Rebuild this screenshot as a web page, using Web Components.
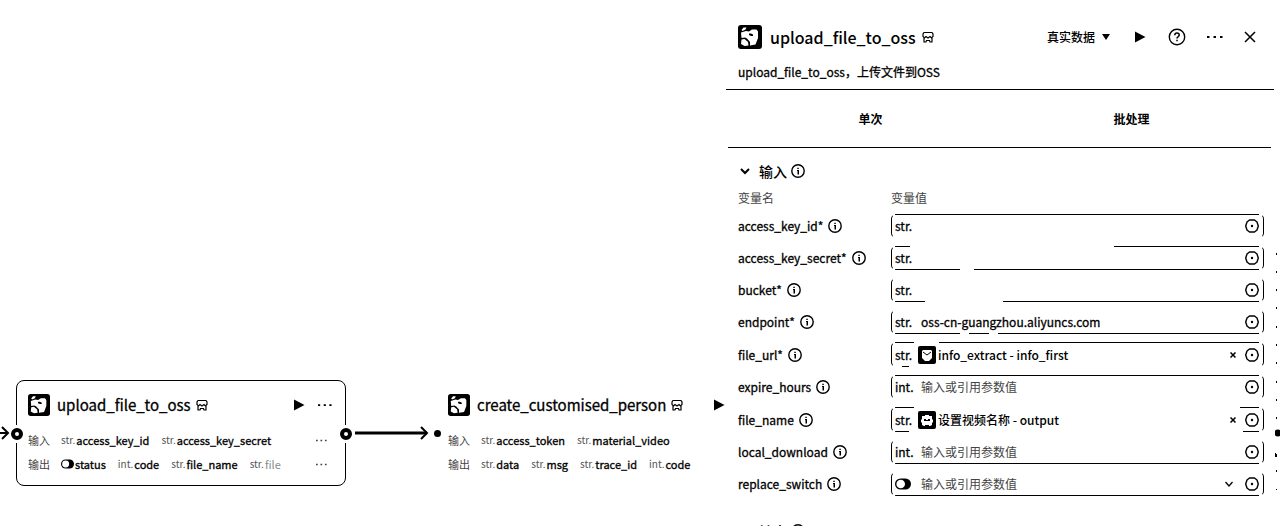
<!DOCTYPE html>
<html lang="zh-CN">
<head>
<meta charset="utf-8">
<meta name="viewport" content="width=device-width, initial-scale=1">
<title>upload_file_to_oss</title>
<style>
  body { margin: 0; background: #fff; color: #000; font-family: "Noto Sans CJK SC", sans-serif; }
</style>
</head>
<body>
<flow-editor></flow-editor>
<script>
const ICONS = {
  logo: ['0 0 24 24', '<rect width="24" height="24" rx="3"/><path fill="#fff" d="M3.500 5l2-2.500h3l-1 2-3 1.500zM3 7.500l5-1.500 3 .5 3-2h4.500L20 6.500V13l-2.500 6.500-5.500 1V17l-3-3.500-2-1-3.500.5zM3.500 14.500l3-.5 3.500 3 .5 3.500-4 .5-3.500-2z"/><path d="M11 8.500h2l2 1v1.500h-2l-2-1z"/>'],
  store: ['0 0 12 12', '<path fill="none" stroke="currentColor" stroke-width="1.200" d="M2 1.500h8l1 1.500v2.500L9.500 7 8 5.500 6 7 4 5.500 2.500 7 1 5.500V3zM2 7v4h2l.5-1.500h3L8 11h2V7"/>'],
  play: ['0 0 12 12', '<path d="M0 0.500l10.500 5.500L0 11.500z"/>'],
  more: ['0 0 16 16', '<path d="M0 7h2.500v2H0zM6.500 7H9v2H6.500zM13 7h2.500v2H13z"/>'],
  help: ['0 0 18 18', '<circle cx="9" cy="9" r="7.700" fill="none" stroke="currentColor" stroke-width="1.400"/><path d="M6.800 7.200q0-2.200 2.200-2.200t2.200 2q0 1-1.200 1.800-1 .6-1 1.700M9 11.700v1.500" fill="none" stroke="currentColor" stroke-width="1.500"/>'],
  close: ['0 0 12 12', '<path d="M1 1l10 10M11 1L1 11" stroke="currentColor" stroke-width="1.500"/>'],
  clear: ['0 0 6 6', '<path d="M.5.5l5 5M5.500.5l-5 5" stroke="currentColor" stroke-width="1.500"/>'],
  info: ['0 0 14 14', '<circle cx="7" cy="7" r="6.200" fill="none" stroke="currentColor" stroke-width="1.400"/><path d="M6 6h2v4.500H6.500V7H6zM6.300 3.800h1.500v1.200H6.300z"/>'],
  down: ['0 0 10 10', '<path d="M1 3l4 4 4-4" fill="none" stroke="currentColor" stroke-width="2"/>'],
  thin: ['0 0 8 8', '<path d="M.5 2L4 6l3.500-4" fill="none" stroke="currentColor" stroke-width="1.300"/>'],
  caret: ['0 0 8 8', '<path d="M0 1h8L4 7z"/>'],
  hex: ['0 0 14 14', '<path d="M4.500 1h5L12 3l1.300 4L12 11l-2.500 2h-5L2 11 .7 7 2 3z" fill="none" stroke="currentColor" stroke-width="1.400" stroke-linejoin="round"/><circle cx="7" cy="7" r="1.200"/>'],
  toggle: ['0 0 16 12', '<rect width="16" height="11" y=".5" rx="5.500"/><circle cx="5.700" cy="6" r="4.300" fill="#fff"/>'],
  mail: ['0 0 18 18', '<rect width="18" height="18" rx="2"/><path fill="#fff" d="M5 4h8l1 1v7l-3 3H7l-3-3V5z"/><path d="M5 6l4 3 4-3" fill="none" stroke="#000"/>'],
  robot: ['0 0 18 18', '<rect width="18" height="18" rx="2"/><path fill="#fff" d="M7 4h4v1h3v3l1 1v2l-1 1v2l-2 1h-1v-1H7v1H6l-2-1v-2l-1-1V9l1-1V5h3z"/><path d="M6 8h2v1h2V8h2v2H6z"/>'],
  ring: ['0 0 12 12', '<circle cx="6" cy="6" r="4" fill="#fff" stroke="currentColor" stroke-width="4"/>'],
  dot: ['0 0 8 8', '<circle cx="4" cy="4" r="4"/>'],
  edge: ['0 0 74 14', '<path d="M0 7h72" stroke="currentColor" stroke-width="3"/><path d="M66 1l6 6-6 6" fill="none" stroke="currentColor" stroke-width="2"/>'],
  arrow: ['0 0 10 14', '<path d="M0 7h8M2 1l6 6-6 6" fill="none" stroke="currentColor" stroke-width="2"/>'],
  edgemarks: ['0 0 5 240', '<path d="M1 3h1v2H1zM1 21h1v2H1zM1 39h1v2H1zM1 57h1v2H1zM1 76h1v2H1zM1 94h1v2H1zM1 112h1v2H1zM1 131h1v2H1zM1 149h1v2H1zM1 167h1v2H1zM0 203h1v1h1v3H0zM1 220h1v2H1zM1 240h1v-1H1z"/><circle cx="3" cy="183" r="3.500"/>']
};

class UiIcon extends HTMLElement {
  connectedCallback() {
    const [box, art] = ICONS[this.getAttribute('name')];
    const [, , w, h] = box.split(' ');
    const width = this.getAttribute('width') || w;
    this.attachShadow({ mode: 'open' }).innerHTML = `
      <style>:host{display:inline-flex;flex:none} svg{display:block;fill:currentColor}</style>
      <svg viewBox="${box}" width="${width}" height="${Math.round(width * h / w)}" aria-hidden="true">${art}</svg>`;
  }
}
customElements.define('ui-icon', UiIcon);

class NodeParam extends HTMLElement {
  connectedCallback() {
    const type = this.getAttribute('type');
    this.attachShadow({ mode: 'open' }).innerHTML = `
      <style>
        :host{display:inline-flex;align-items:center;flex:none;gap:1px;font-size:11px;line-height:16px}
        :host(:not([faded])) span{-webkit-text-stroke:.3px}
        small{font-size:10px;color:#555}
        :host([faded]){color:#888}
      </style>
      ${type === 'bool' ? '<ui-icon name="toggle" width="13"></ui-icon>' : `<small>${type}.</small>`}<span><slot></slot></span>`;
  }
}
customElements.define('node-param', NodeParam);

class FlowNode extends HTMLElement {
  connectedCallback() {
    this.attachShadow({ mode: 'open' }).innerHTML = `
      <style>
        :host{display:block;box-sizing:border-box;width:330px;padding:13px 11px;border:1px solid transparent;border-radius:8px}
        :host([selected]){border-color:#000}
        header{display:flex;align-items:center;height:22px;margin-bottom:16px}
        h2{margin:0 5px 0 7px;font-size:15px;line-height:22px;font-weight:400;-webkit-text-stroke:.3px}
        .space{flex:1}
        button{display:flex;padding:0;border:0;background:none;color:inherit}
        .run{margin-right:12px}
        header .more{margin-right:2px}
        .row{display:flex;align-items:center;height:16px;font-size:11px;color:#444}
        .row + .row{margin-top:8px}
        .label{flex:none;width:33px}
        .items{display:flex;gap:12px;flex:1;overflow:hidden;color:#000}
        .row button{margin:0 7px 0 32px}
      </style>
      <header><ui-icon name="logo" width="22"></ui-icon><h2>${this.getAttribute('heading')}</h2><ui-icon name="store"></ui-icon>
        <span class="space"></span><button class="run" aria-label="运行"><ui-icon name="play"></ui-icon></button><button class="more" aria-label="更多"><ui-icon name="more" width="14"></ui-icon></button></header>
      <div class="row"><span class="label">输入</span><div class="items"><slot name="in"></slot></div><button aria-label="更多输入"><ui-icon name="more" width="11"></ui-icon></button></div>
      <div class="row"><span class="label">输出</span><div class="items"><slot name="out"></slot></div><button aria-label="更多输出"><ui-icon name="more" width="11"></ui-icon></button></div>`;
  }
}
customElements.define('flow-node', FlowNode);

class FlowCanvas extends HTMLElement {
  connectedCallback() {
    this.attachShadow({ mode: 'open' }).innerHTML = `
      <style>
        :host{display:block;position:relative;overflow:hidden}
        flow-node,.pin{position:absolute}
        .pin{background:#fff}
        .port{padding:3px 0}
      </style>
      <flow-node selected heading="upload_file_to_oss" style="left:16px;top:380px">
        <node-param slot="in" type="str">access_key_id</node-param><node-param slot="in" type="str">access_key_secret</node-param>
        <node-param slot="out" type="bool">status</node-param><node-param slot="out" type="int">code</node-param><node-param slot="out" type="str">file_name</node-param><node-param slot="out" type="str" faded>file</node-param>
      </flow-node>
      <flow-node heading="create_customised_person" style="left:436px;top:380px">
        <node-param slot="in" type="str">access_token</node-param><node-param slot="in" type="str">material_video</node-param>
        <node-param slot="out" type="str">data</node-param><node-param slot="out" type="str">msg</node-param><node-param slot="out" type="str">trace_id</node-param><node-param slot="out" type="int">code</node-param>
      </flow-node>
      <ui-icon class="pin" name="arrow" style="left:0;top:426px"></ui-icon>
      <ui-icon class="pin port" name="ring" style="left:11px;top:425px"></ui-icon>
      <ui-icon class="pin port" name="ring" style="left:340px;top:425px"></ui-icon>
      <ui-icon class="pin" name="edge" style="left:355px;top:426px"></ui-icon>
      <ui-icon class="pin" name="dot" width="7" style="left:434px;top:430px"></ui-icon>`;
  }
}
customElements.define('flow-canvas', FlowCanvas);

/* One variable: its name, and a field that holds a value, a reference chip or a choice.
   "top" and "bottom" list the drawn spans of the outline, in pixels from the left edge. */
class VariableRow extends HTMLElement {
  connectedCallback() {
    const at = n => this.getAttribute(n) || '';
    const spans = n => at(n).split(' ').filter(Boolean).map(s => {
      const [a, b] = s.split('-');
      const end = b === 'end' ? 'calc(100% - 5px)' : b + 'px';
      return `transparent ${a}px, #000 ${a}px, #000 ${end}, transparent ${end}`;
    }).join(', ') || 'transparent, transparent';
    const hint = '输入或引用参数值';
    const chip = at('ref') ? `<span class="chip"><ui-icon name="${at('icon')}"></ui-icon>${at('ref')}</span>` : '';
    const control = at('type') === 'bool'
      ? `<select id="v"><option>${hint}</option></select><ui-icon class="drop" name="thin"></ui-icon>`
      : `${chip}<input id="v" value="${at('value')}" placeholder="${at('type') === 'int' ? hint : ''}">`;
    this.attachShadow({ mode: 'open' }).innerHTML = `
      <style>
        :host{display:grid;grid-template-columns:153px minmax(0,1fr);align-items:center}
        .name{display:flex;align-items:center;gap:5px;font-size:12px;line-height:18px;-webkit-text-stroke:.3px}
        .field{display:flex;align-items:center;box-sizing:border-box;height:24px;padding:0 4px 0 3px;border:1px solid #000;border-top-color:transparent;border-bottom-color:transparent;border-radius:5px;
          background:linear-gradient(to right, ${spans('top')}) top/100% 1px no-repeat border-box, linear-gradient(to right, ${spans('bottom')}) bottom/100% 1px no-repeat border-box}
        :host([ref]) .field{height:25px}
        .type{display:flex;flex:none;width:23px;font-size:12px;line-height:20px;-webkit-text-stroke:.3px}
        .chip{display:flex;align-items:center;gap:2px;flex:none;font-size:12px;line-height:18px;font-weight:500}
        input,select{flex:1;min-width:0;margin:0;padding:0 0 0 3px;border:0;background:none;outline:0;appearance:none;color:#000;font:400 12px/20px "Noto Sans CJK SC",sans-serif}
        input{-webkit-text-stroke:.3px}
        select,input::placeholder{color:#444;opacity:1;-webkit-text-stroke:0}
        button{display:flex;padding:0;border:0;background:none;color:#000}
        .clear{margin-right:9px}
        .drop{margin-right:12px}
      </style>
      <label class="name" for="v">${at('name')}<ui-icon name="info"></ui-icon></label>
      <div class="field"><span class="type">${at('type') === 'bool' ? '<ui-icon name="toggle"></ui-icon>' : at('type') + '.'}</span>${control}
        ${chip && '<button class="clear" aria-label="清除"><ui-icon name="clear"></ui-icon></button>'}<button aria-label="引用变量"><ui-icon name="hex"></ui-icon></button></div>`;
  }
}
customElements.define('variable-row', VariableRow);

class PanelSection extends HTMLElement {
  connectedCallback() {
    this.attachShadow({ mode: 'open' }).innerHTML = `
      <style>
        :host{display:block;padding:12px 16px 12px 12px}
        h3{display:flex;align-items:center;margin:0 0 7px 2px;font-size:14px;line-height:22px;font-weight:500}
        span{margin:0 4px 0 9px}
      </style>
      <h3><ui-icon name="down"></ui-icon><span>${this.getAttribute('heading')}</span><ui-icon name="info"></ui-icon></h3><slot></slot>`;
  }
}
customElements.define('panel-section', PanelSection);

class NodePanel extends HTMLElement {
  connectedCallback() {
    this.attachShadow({ mode: 'open' }).innerHTML = `
      <style>
        :host{display:block;position:relative;background:#fff}
        header{display:flex;align-items:center;height:24px;padding:25px 24px 0 12px}
        h1{margin:0 6px 0 8px;font-size:16px;line-height:24px;font-weight:500}
        .space{flex:1}
        .mode{display:flex;align-items:center;gap:6px;margin-right:25px}
        select{appearance:none;margin:0;padding:0;border:0;background:none;color:#000;font:500 12px/20px "Noto Sans CJK SC",sans-serif}
        button{display:flex;justify-content:center;padding:0;border:0;background:none;color:#000}
        .tools{display:flex;align-items:center;gap:21px}
        p{margin:0;padding:13px 12px 7px;font-size:12px;line-height:20px;-webkit-text-stroke:.3px}
        hr{height:1px;margin:0 6px 0 0;border:0;background:#000}
        .tabs{display:grid;grid-template-columns:1fr 1fr;padding:19px 18px 18px 14px}
        .tabs button{font:700 12px/20px "Noto Sans CJK SC",sans-serif}
        .tabs + hr{margin:0 9px 0 2px}
        .head{display:grid;grid-template-columns:153px 1fr;margin-bottom:7px;font-size:12px;line-height:18px;color:#444}
        .list{display:grid;gap:8px}
        .marks{position:absolute;right:0;top:250px}
      </style>
      <header><ui-icon name="logo"></ui-icon><h1>upload_file_to_oss</h1><ui-icon name="store"></ui-icon><span class="space"></span>
        <div class="mode"><select aria-label="数据来源"><option>真实数据</option></select><ui-icon name="caret"></ui-icon></div>
        <div class="tools"><button aria-label="运行"><ui-icon name="play"></ui-icon></button><button aria-label="帮助"><ui-icon name="help"></ui-icon></button><button aria-label="更多"><ui-icon name="more"></ui-icon></button><button aria-label="关闭"><ui-icon name="close"></ui-icon></button></div></header>
      <p>upload_file_to_oss，上传文件到OSS</p>
      <hr>
      <div class="tabs" role="tablist"><button role="tab" aria-selected="true">单次</button><button role="tab" aria-selected="false">批处理</button></div>
      <hr>
      <panel-section heading="输入">
        <div class="head"><span>变量名</span><span>变量值</span></div>
        <div class="list">
          <variable-row name="access_key_id*" type="str" top="4-end"></variable-row>
          <variable-row name="access_key_secret*" type="str" top="4-19 223-end" bottom="4-69 83-end"></variable-row>
          <variable-row name="bucket*" type="str" bottom="4-34 112-end"></variable-row>
          <variable-row name="endpoint*" type="str" value="oss-cn-guangzhou.aliyuncs.com" bottom="4-69 78-98 107-end"></variable-row>
          <variable-row name="file_url*" type="str" icon="mail" ref="info_extract - info_first" top="4-23 48-end" bottom="11-18"></variable-row>
          <variable-row name="expire_hours" type="int" top="4-end"></variable-row>
          <variable-row name="file_name" type="str" icon="robot" ref="设置视频名称 - output" top="4-23 349-end" bottom="4-18 352-end"></variable-row>
          <variable-row name="local_download" type="int" bottom="4-end"></variable-row>
          <variable-row name="replace_switch" type="bool" bottom="4-end"></variable-row>
        </div>
      </panel-section>
      <panel-section heading="输出"></panel-section>
      <ui-icon class="marks" name="edgemarks"></ui-icon>`;
  }
}
customElements.define('node-panel', NodePanel);

class FlowEditor extends HTMLElement {
  connectedCallback() {
    this.attachShadow({ mode: 'open' }).innerHTML = `
      <style>
        :host{display:grid;grid-template-columns:minmax(0,1fr) minmax(0,554px);height:100vh;overflow:hidden}
      </style>
      <flow-canvas></flow-canvas><node-panel></node-panel>`;
  }
}
customElements.define('flow-editor', FlowEditor);
</script>
</body>
</html>
